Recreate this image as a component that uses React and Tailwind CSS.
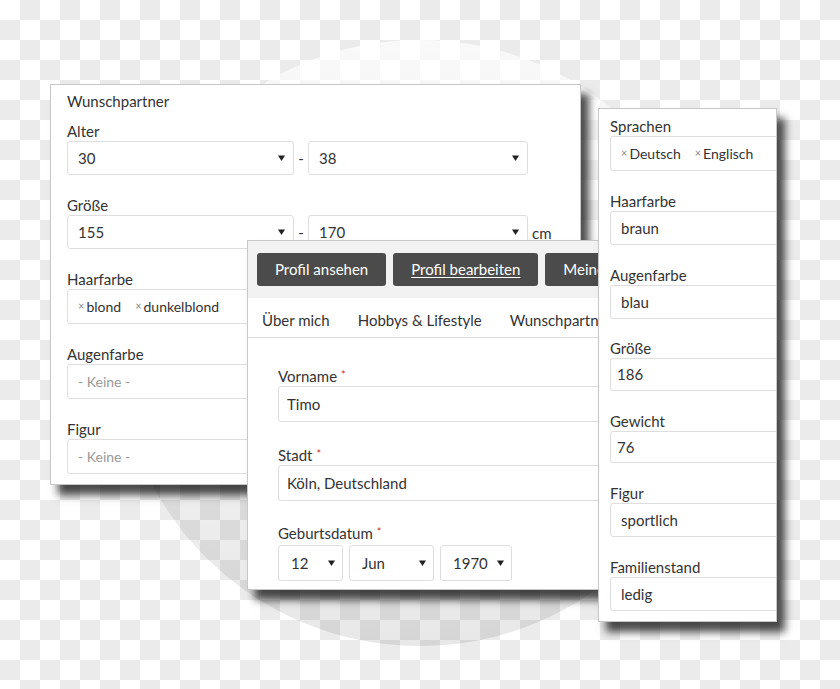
import React from "react";

const font = { fontFamily: "Lato, 'Open Sans', sans-serif" };

function Arrow() {
  return (
    <svg width="7" height="6" viewBox="0 0 7 6" className="shrink-0">
      <path d="M0 0.5 L7 0.5 L3.5 6 Z" fill="#222" />
    </svg>
  );
}

function Select({ value, className = "", pl = "pl-[10px]", pr = "pr-[8px]" }) {
  return (
    <div
      className={`flex items-center justify-between bg-white border border-[#dedede] rounded-[3px] ${pl} ${pr} ${className}`}
    >
      <span>{value}</span>
      <Arrow />
    </div>
  );
}

function Box({ children, className = "", pl = "pl-[10px]" }) {
  return (
    <div className={`flex items-center bg-white border border-[#dedede] rounded-[3px] ${pl} ${className}`}>
      {children}
    </div>
  );
}

function Tag({ label }) {
  return (
    <span className="flex items-center text-[14px]">
      <span className="text-[11px] text-[#8a8a8a] mr-[2px]">×</span>
      <span>{label}</span>
    </span>
  );
}

function Label({ children, required }) {
  return (
    <div className="h-[20px] leading-[20px]">
      {children}
      {required && <span className="text-[#c9302c] text-[11px] relative -top-[3px] ml-[4px]">*</span>}
    </div>
  );
}

const cardShadow = "shadow-[8px_10px_8px_rgba(0,0,0,0.7)]";

function PartnerCard() {
  return (
    <div className={`absolute left-[50px] top-[84px] w-[531px] h-[401px] bg-white border border-[#c8c8c8] ${cardShadow} pt-[6px] pl-[16px]`}>
      <div className="h-[20px] leading-[20px] mb-[10px]">Wunschpartner</div>

      <Label>Alter</Label>
      <div className="flex items-center mb-[20px]">
        <Select value="30" className="w-[227px] h-[34px]" />
        <span className="w-[14px] text-center">-</span>
        <Select value="38" className="w-[220px] h-[34px]" />
      </div>

      <Label>Größe</Label>
      <div className="flex items-center mb-[20px]">
        <Select value="155" className="w-[227px] h-[34px]" />
        <span className="w-[14px] text-center">-</span>
        <Select value="170" className="w-[220px] h-[34px]" />
        <span className="ml-[4px] mt-[2px]">cm</span>
      </div>

      <Label>Haarfarbe</Label>
      <Box className="w-[461px] h-[35px] gap-[14px] mb-[20px]">
        <Tag label="blond" />
        <Tag label="dunkelblond" />
      </Box>

      <Label>Augenfarbe</Label>
      <Box className="w-[461px] h-[35px] mb-[20px] text-[#999] text-[14px]">- Keine -</Box>

      <Label>Figur</Label>
      <Box className="w-[461px] h-[35px] text-[#999] text-[14px]">- Keine -</Box>
    </div>
  );
}

function ProfileCard() {
  const buttons = ["Profil ansehen", "Profil bearbeiten", "Meine Fotos"];
  return (
    <div className={`absolute left-[247px] top-[240px] w-[460px] h-[350px] bg-white border border-[#c8c8c8] ${cardShadow}`}>
      <div className="bg-[#f2f2f2] h-[57px] pt-[12px] pl-[9px] flex gap-[7px]">
        {buttons.map((b, i) => (
          <div
            key={b}
            className={`h-[33px] px-[18px] flex items-center rounded-[3px] bg-[#4b4b4b] text-white whitespace-nowrap ${
              i === 1 ? "underline underline-offset-2" : ""
            }`}
          >
            {b}
          </div>
        ))}
      </div>
      <div className="h-[40px] border-b border-[#dcdcdc] flex items-center pt-[5px] pl-[14px] gap-[28px] whitespace-nowrap">
        <span>Über mich</span>
        <span>Hobbys &amp; Lifestyle</span>
        <span>Wunschpartner</span>
      </div>
      <div className="pt-[28px] pl-[30px]">
        <Label required>Vorname</Label>
        <Box className="w-[400px] h-[36px] mb-[23px]" pl="pl-[8px]">Timo</Box>

        <Label required>Stadt</Label>
        <Box className="w-[400px] h-[36px] mb-[22px]" pl="pl-[8px]">Köln, Deutschland</Box>

        <Label required>Geburtsdatum</Label>
        <div className="flex mt-[2px] gap-[6px]">
          <Select value="12" className="w-[65px] h-[36px]" pl="pl-[12px]" pr="pr-[7px]" />
          <Select value="Jun" className="w-[85px] h-[36px]" pl="pl-[12px]" pr="pr-[7px]" />
          <Select value="1970" className="w-[72px] h-[36px]" pl="pl-[12px]" pr="pr-[7px]" />
        </div>
      </div>
    </div>
  );
}

function DetailsCard() {
  const rows = [
    { label: "Sprachen", h: "h-[35px]", tags: ["Deutsch", "Englisch"] },
    { label: "Haarfarbe", h: "h-[34px]", value: "braun" },
    { label: "Augenfarbe", h: "h-[34px]", value: "blau" },
    { label: "Größe", h: "h-[33px]", value: "186", num: true },
    { label: "Gewicht", h: "h-[32px]", value: "76", num: true },
    { label: "Figur", h: "h-[34px]", value: "sportlich" },
    { label: "Familienstand", h: "h-[34px]", value: "ledig" },
  ];
  return (
    <div className={`absolute left-[598px] top-[108px] w-[179px] h-[514px] bg-white border border-[#c8c8c8] ${cardShadow} overflow-hidden pt-[7px] pl-[11px]`}>
      {rows.map((r, i) => (
        <div key={r.label} className={i === 2 ? "mb-[19px]" : i < rows.length - 1 ? "mb-[20px]" : ""}>
          <Label>{r.label}</Label>
          <Box className={`w-[200px] ${r.h} ${r.tags ? "gap-[14px]" : ""}`} pl={r.num ? "pl-[6px]" : "pl-[10px]"}>
            {r.tags ? r.tags.map((t) => <Tag key={t} label={t} />) : r.value}
          </Box>
        </div>
      ))}
    </div>
  );
}

export default function App() {
  return (
    <div
      className="relative w-[840px] h-[689px] overflow-hidden bg-white bg-[image:repeating-conic-gradient(#ebebeb_0_25%,#ffffff_0_50%)] bg-[length:40px_40px] text-[#333] text-[15px]"
      style={font}
    >
      <div className="absolute left-[117px] top-[40px] w-[606px] h-[606px] rounded-full bg-[linear-gradient(to_bottom,rgba(255,255,255,0.7)_0%,rgba(255,255,255,0.2)_35%,rgba(0,0,0,0.05)_55%,rgba(0,0,0,0.09)_100%)]" />
      <PartnerCard />
      <ProfileCard />
      <DetailsCard />
    </div>
  );
}
